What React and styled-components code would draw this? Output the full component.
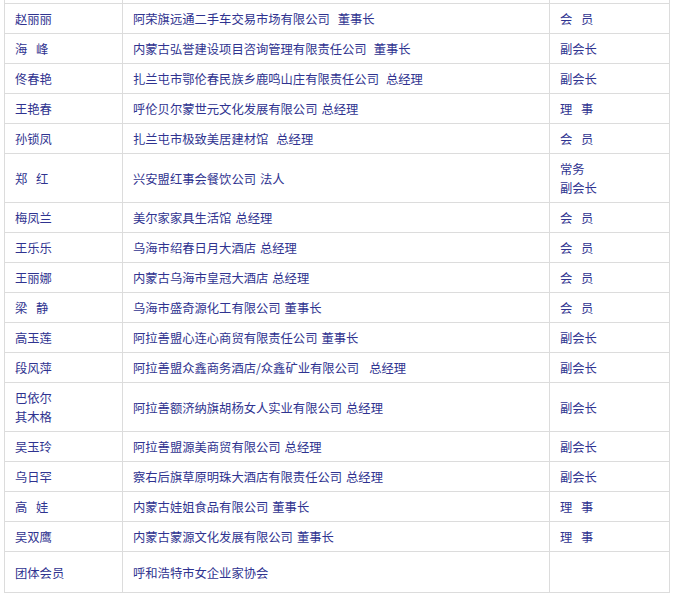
import React from "react";
import styled, { createGlobalStyle } from "styled-components";

const GlobalStyle = createGlobalStyle`
    body{
        margin:0;
        background:#ffffff;
        font-family:"Noto Sans CJK SC", "Noto Sans", sans-serif;
    }
`;

const PageWrapper = styled.div`
    width:673px;
    height:598px;
    overflow:hidden;
    padding-left:4px;
    box-sizing:border-box;
`;

const Table = styled.table`
    width:665px;
    border-collapse:collapse;
    table-layout:fixed;
`;

const Row = styled.tr`
    height:${(p) => p.$height || 30}px;
`;

const Cell = styled.td`
    border:1px solid #dcdcdc;
    padding:6px 10px 4px;
    font-size:12.3px;
    line-height:19px;
    color:#2f3390;
    vertical-align:middle;
    white-space:nowrap;
`;

const TopCell = styled.td`
    border:1px solid #dcdcdc;
    border-top:none;
    padding:0;
    height:3px;
`;

const Spread = styled.span`
    letter-spacing:8.7px;
`;

const Title = styled.span`
    margin-left:${(p) => p.$gap}px;
`;

const members = [
    { name: "赵丽丽", company: "阿荣旗远通二手车交易市场有限公司", title: "董事长", gap: 8, role: "会员", spread: true },
    { name: "海峰", nameSpread: true, company: "内蒙古弘誉建设项目咨询管理有限责任公司", title: "董事长", gap: 7, role: "副会长" },
    { name: "佟春艳", company: "扎兰屯市鄂伦春民族乡鹿鸣山庄有限责任公司", title: "总经理", gap: 7, role: "副会长" },
    { name: "王艳春", company: "呼伦贝尔蒙世元文化发展有限公司", title: "总经理", gap: 4, role: "理事", spread: true },
    { name: "孙锁凤", company: "扎兰屯市极致美居建材馆", title: "总经理", gap: 8, role: "会员", spread: true },
    { name: "郑红", nameSpread: true, company: "兴安盟红事会餐饮公司", title: "法人", gap: 4, role: ["常务", "副会长"], height: 49 },
    { name: "梅凤兰", company: "美尔家家具生活馆", title: "总经理", gap: 4, role: "会员", spread: true },
    { name: "王乐乐", company: "乌海市绍春日月大酒店", title: "总经理", gap: 4, role: "会员", spread: true },
    { name: "王丽娜", company: "内蒙古乌海市皇冠大酒店", title: "总经理", gap: 4, role: "会员", spread: true },
    { name: "梁静", nameSpread: true, company: "乌海市盛奇源化工有限公司", title: "董事长", gap: 4, role: "会员", spread: true },
    { name: "高玉莲", company: "阿拉善盟心连心商贸有限责任公司", title: "董事长", gap: 4, role: "副会长" },
    { name: "段风萍", company: "阿拉善盟众鑫商务酒店/众鑫矿业有限公司", title: "总经理", gap: 10, role: "副会长" },
    { name: ["巴依尔", "其木格"], company: "阿拉善额济纳旗胡杨女人实业有限公司", title: "总经理", gap: 4, role: "副会长", height: 49 },
    { name: "吴玉玲", company: "阿拉善盟源美商贸有限公司", title: "总经理", gap: 4, role: "副会长" },
    { name: "乌日罕", company: "察右后旗草原明珠大酒店有限责任公司", title: "总经理", gap: 4, role: "副会长" },
    { name: "高娃", nameSpread: true, company: "内蒙古娃姐食品有限公司", title: "董事长", gap: 4, role: "理事", spread: true },
    { name: "吴双鹰", company: "内蒙古蒙源文化发展有限公司", title: "董事长", gap: 4, role: "理事", spread: true },
    { name: "团体会员", company: "呼和浩特市女企业家协会", role: "", height: 41 },
];

const Lines = ({ value }) =>
    value.map((line, i) => (
        <React.Fragment key={i}>
            {i > 0 && <br />}
            {line}
        </React.Fragment>
    ));

const renderText = (value, spread) => {
    if (Array.isArray(value)) return <Lines value={value} />;
    if (spread) return <Spread>{value}</Spread>;
    return value;
};

const App = () => {
    return (
        <PageWrapper>
            <GlobalStyle />
            <Table>
                <colgroup>
                    <col style={{ width: 118 }} />
                    <col style={{ width: 427 }} />
                    <col style={{ width: 120 }} />
                </colgroup>
                <tbody>
                    <tr>
                        <TopCell />
                        <TopCell />
                        <TopCell />
                    </tr>
                    {members.map((m, i) => (
                        <Row key={i} $height={m.height}>
                            <Cell>{renderText(m.name, m.nameSpread)}</Cell>
                            <Cell>
                                {m.company}
                                {m.title && <Title $gap={m.gap}>{m.title}</Title>}
                            </Cell>
                            <Cell>{renderText(m.role, m.spread)}</Cell>
                        </Row>
                    ))}
                </tbody>
            </Table>
        </PageWrapper>
    );
};

export default App;
